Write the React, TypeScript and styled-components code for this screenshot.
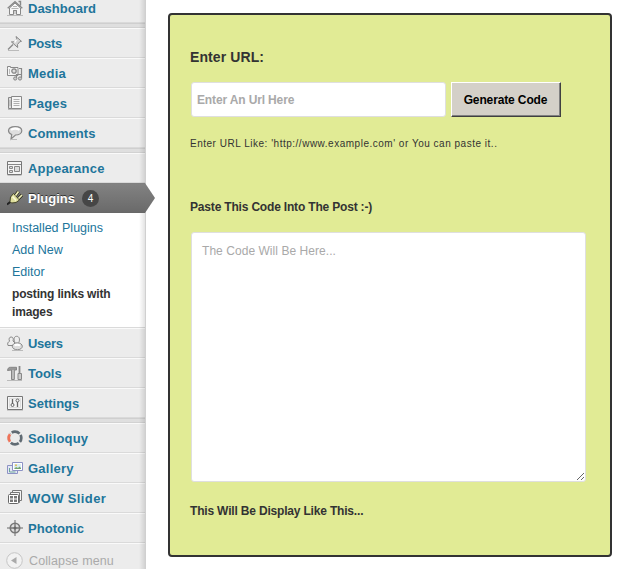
import React from "react";
import styled, { createGlobalStyle, css } from "styled-components";

const GlobalStyle = createGlobalStyle`
  html, body { margin: 0; height: 569px; overflow: hidden; background: #fff; }
  body { font-family: "Liberation Sans", Arial, sans-serif; font-size: 12px; color: #333; }
  * { box-sizing: border-box; }
`;

const Page = styled.div`
  display: flex;
  width: 631px;
  height: 569px;
  overflow: hidden;
`;

const Sidebar = styled.nav`
  position: relative;
  flex: none;
  width: 146px;
  height: 569px;
  background: #ececec;
  border-right: 1px solid #d0d0d0;
  &::after {
    content: "";
    position: absolute;
    inset: 0 0 0 auto;
    width: 6px;
    background: linear-gradient(to right, rgba(0, 0, 0, 0), rgba(0, 0, 0, 0.11));
    pointer-events: none;
  }
`;

const Group = styled.div<{ $clipped?: boolean }>`
  margin-top: ${(p) => (p.$clipped ? "-7px" : "0")};
`;

const Separator = styled.div`
  height: 5px;
  background: #dfdfdf;
  border-top: 1px solid #cfcfcf;
  border-bottom: 1px solid #d2d2d2;
`;

const Row = styled.a<{ $active?: boolean }>`
  display: flex;
  align-items: center;
  height: 30px;
  padding: 0 0 0 7px;
  gap: 5px;
  font-weight: bold;
  font-size: 13px;
  color: #21759b;
  border-top: 1px solid #fafafa;
  border-bottom: 1px solid #dadada;
  svg { flex: none; }
  ${(p) =>
    p.$active &&
    css`
      position: relative;
      z-index: 1;
      color: #fff;
      text-shadow: 0 -1px 0 #333;
      background: linear-gradient(#828282, #6a6a6a);
      border-top-color: #808080;
      border-bottom-color: #686868;
      &::after {
        content: "";
        position: absolute;
        left: 145px;
        top: -1px;
        width: 10px;
        height: 30px;
        background: linear-gradient(#828282, #6a6a6a);
        clip-path: polygon(0 0, 100% 50%, 0 100%);
      }
    `}
`;

const Label = styled.span<{ $track: number }>`
  letter-spacing: ${(p) => p.$track}px;
  line-height: 18px;
  white-space: nowrap;
`;

const MenuLabel = styled(Label)`
  padding-top: 2px;
`;

const Count = styled.span`
  width: 17px;
  height: 17px;
  margin: 1px 0 0 2px;
  border-radius: 50%;
  background: #464646;
  color: #fff;
  font-size: 10px;
  font-weight: normal;
  line-height: 17px;
  text-align: center;
  text-shadow: none;
`;

const Submenu = styled.div`
  height: 115px;
  padding: 4px 0 0 12px;
  background: #fff;
  border-bottom: 1px solid #dadada;
  display: flex;
  flex-direction: column;
`;

const SubLink = styled.a<{ $current?: boolean }>`
  font-size: ${(p) => (p.$current ? "12px" : "12.5px")};
  font-weight: ${(p) => (p.$current ? "bold" : "normal")};
  letter-spacing: ${(p) => (p.$current ? "-0.16px" : "0")};
  color: ${(p) => (p.$current ? "#333" : "#21759b")};
  line-height: 18px;
  padding: 2px 0;
`;

const Collapse = styled.div`
  display: flex;
  align-items: center;
  gap: 6px;
  height: 36px;
  padding: 0 0 2px 6px;
  border-top: 1px solid #fafafa;
  font-size: 12.5px;
  color: #aaa;
`;

const Panel = styled.main`
  display: flex;
  flex-direction: column;
  width: 444px;
  height: 544px;
  margin: 13px 0 0 22px;
  padding: 0 0 0 20px;
  border: 2px solid #333;
  border-radius: 4px;
  background: #e1eb95;
`;

const Title = styled.h3`
  margin: 33px 0 15px;
  font-size: 14px;
  line-height: 19px;
  letter-spacing: 0.1px;
`;

const Form = styled.div`
  display: flex;
  gap: 5px;
  padding-left: 1px;
`;

const UrlInput = styled.input`
  width: 255px;
  height: 35px;
  padding: 0 5px;
  border: 1px solid #dfdfdf;
  border-radius: 3px;
  background: #fff;
  outline: none;
  font: bold 12px "Liberation Sans", Arial, sans-serif;
  letter-spacing: -0.14px;
  &::placeholder { color: #a9a9a9; opacity: 1; }
`;

const Generate = styled.button`
  width: 110px;
  height: 35px;
  padding: 0 1px 0 0;
  border: 1px solid;
  border-color: #fff #404040 #404040 #fff;
  box-shadow: inset -1px -1px 0 #808080;
  background: #d4d0c8;
  color: #000;
  font: bold 12px "Liberation Sans", Arial, sans-serif;
  letter-spacing: -0.13px;
`;

const Hint = styled.p`
  margin: 19px 0 47px;
  font-size: 10px;
  line-height: 15px;
  letter-spacing: 0.51px;
  white-space: nowrap;
`;

const Caption = styled.h4`
  margin: 0;
  font-size: 12px;
  line-height: 18px;
  letter-spacing: -0.18px;
`;

const Code = styled.textarea`
  width: 395px;
  height: 250px;
  margin: 16px 0 20px 1px;
  padding: 10px;
  border: 1px solid #dfdfdf;
  border-radius: 3px;
  background: #fff;
  outline: none;
  resize: both;
  font: 12px/17px "Liberation Sans", Arial, sans-serif;
  letter-spacing: 0.05px;
  &::placeholder { color: #a9a9a9; opacity: 1; }
`;

const Glyph = ({ children }: { children: React.ReactNode }) => (
  <svg width="16" height="16" viewBox="0 0 16 16" fill="none" stroke="#888" strokeWidth="1">
    {children}
  </svg>
);

const icons = {
  home: (
    <Glyph>
      <path d="M2.5 8v6.5h4v-4h3v4h4V8L8 3z" fill="#f7f7f7" />
      <path d="M.7 8.300 8 1.700l7.300 6.600M11.500 1.500h2v4" strokeWidth="1.400" />
      <path d="M4.500 8.500h7M6 6.500h4" stroke="#b5b5b5" />
      <path d="M6.500 14v-3.500h3V14" fill="#ccc" />
      <path d="M0 15.500h16" stroke="#bbb" />
    </Glyph>
  ),
  pin: (
    <Glyph>
      <path d="m1 14.500 5-5" strokeWidth="1.300" />
      <path d="m9 1.500 5.500 4.800-1.800.5-2.200 2.700.2 3-6.300-5.600 3-.1 2.300-3z" fill="#d5d5d5" />
      <path d="m9.500 4.500-2 3" stroke="#fff" strokeWidth="1.500" />
      <path d="M1 15.500h11" stroke="#bbb" />
    </Glyph>
  ),
  media: (
    <Glyph>
      <path d="M.5 3.500V1.500h3v1h7.500v8H.5z" fill="#f5f5f5" />
      <circle cx="7" cy="6" r="2.200" fill="#ddd" strokeWidth="1.300" />
      <path d="M2.500 4v5" stroke="#bbb" />
      <path d="M12 3.500h2.500v9.500M9.500 13V9.500h5" strokeWidth="1.200" />
      <circle cx="8.200" cy="13.500" r="1.600" fill="#ccc" />
      <circle cx="13" cy="13.500" r="1.600" fill="#ccc" />
    </Glyph>
  ),
  pages: (
    <Glyph>
      <path d="M1.500 2.500h7v11h-7z" fill="#ddd" />
      <path d="M4.500 1.500h10v12h-10z" fill="#f7f7f7" />
      <path d="M6.500 4.500h6M6.500 6.500h6M6.500 8.500h6M6.500 10.500h6" stroke="#b0b0b0" />
      <path d="M3 5v6" stroke="#aaa" />
      <path d="M1 14.500h14" stroke="#bbb" />
    </Glyph>
  ),
  comment: (
    <Glyph>
      <path d="M8.200 1.600c4 0 6.600 1.700 6.600 4.200S12 10 8.500 10L4 14l.7-4.500C2.700 8.700 1.500 7.500 1.500 5.800c0-2.500 2.700-4.200 6.700-4.200z" fill="#dedede" strokeWidth="1.200" />
      <path d="M4 4.800c2-1.700 6-1.700 8.500 0" stroke="#fff" strokeWidth="2.200" />
      <path d="M3 14.500h7" stroke="#bbb" />
    </Glyph>
  ),
  layout: (
    <Glyph>
      <path d="M.5 1.500h14v13H.5z" fill="#f5f5f5" stroke="#777" />
      <path d="M1 4.500h13" />
      <path d="M2.500 6.500h3v2h-3zM2.500 10.500h3v2h-3zM7.500 6.500h5v5h-5z" fill="#ddd" />
      <path d="M.5 15.500h14" stroke="#c5c5c5" />
    </Glyph>
  ),
  plug: (
    <Glyph>
      <path d="M0 14.500 4.500 11" stroke="#222" strokeWidth="2" />
      <path d="m6.500 3.500 6 6.500-3.500 2.500-4.500.5-1.500-1.500.5-4.500z" fill="#dede9c" stroke="#45452c" />
      <path d="m8.500 5.500 3-4M11.500 8.500l3.500-3.500" stroke="#30301f" strokeWidth="3.200" />
      <path d="m8.500 5.500 3-4M11.500 8.500l3.500-3.500" stroke="#f0efb9" strokeWidth="1.700" />
      <path d="m5.500 6.500 3.500 4" stroke="#fbfad9" strokeWidth="1.500" />
    </Glyph>
  ),
  users: (
    <Glyph>
      <path d="M1 10.500C.2 8.200 1 7 2.500 6.300 1.500 3.500 2.500 2 4.200 2s2.600 1.700 1.800 4L8 8v2.500z" fill="#eee" />
      <path d="M8 7.500C6.500 4.500 6.800 1.500 9.500 1.300s3.800 3 2.300 6.200" fill="#eee" />
      <ellipse cx="10.300" cy="11.300" rx="5" ry="3.500" fill="#ddd" />
      <path d="M7.500 10.500c1-1 4-1 5.500 0" stroke="#fff" strokeWidth="1.800" />
      <path d="M5 15.500h11" stroke="#bbb" />
    </Glyph>
  ),
  tools: (
    <Glyph>
      <path d="M.5 5.500C1 2.800 2 2.300 3.500 2.300h6V5H7.300v9.500H4.500V5z" fill="#999" stroke="#858585" />
      <path d="M6 5v9" stroke="#ddd" />
      <path d="M12.500 1v7" strokeWidth="1.800" />
      <path d="M11 8.500h3.500v6H11z" fill="#ccc" />
      <path d="M0 15.500h15" stroke="#bbb" />
    </Glyph>
  ),
  settings: (
    <Glyph>
      <path d="M.5 1.500h15v13H.5z" fill="#f5f5f5" stroke="#777" />
      <path d="M2.500 3.500h11v9h-11z" stroke="#ddd" />
      <path d="M5.500 4v5M10.500 7v5" stroke="#666" strokeWidth="1.300" />
      <circle cx="5.500" cy="10" r="1.500" stroke="#666" />
      <circle cx="10.500" cy="5.500" r="1.500" stroke="#666" />
      <path d="M0 15.500h16" stroke="#ccc" />
    </Glyph>
  ),
  ring: (
    <Glyph>
      <circle cx="8" cy="8" r="6.300" stroke="#606b73" strokeWidth="2.700" strokeDasharray="8.400 1.500" strokeDashoffset="4.200" />
      <path d="M3.300 12.200A6.300 6.300 0 0 1 3.300 3.800" stroke="#ececec" strokeWidth="3.200" />
      <path d="M3 11.700A6.300 6.300 0 0 1 3 4.300" stroke="#f07358" strokeWidth="2.700" />
    </Glyph>
  ),
  gallery: (
    <Glyph>
      <path d="M.5 5.500h10v8H.5z" fill="#e5e8f5" stroke="#8c92c5" />
      <path d="M2.500 8v4h6" stroke="#6ca59b" />
      <path d="M5.500 2.500h10v8h-10z" fill="#fff" stroke="#8c92c5" />
      <path d="M7 4h7v5H7z" fill="#d9edf5" stroke="none" />
      <path d="m7 9 2-2 2 1 1.500-1.500L14 8v1z" fill="#76a46d" stroke="none" />
      <circle cx="9" cy="5.200" r="1" fill="#e4bd4c" stroke="none" />
    </Glyph>
  ),
  slider: (
    <Glyph>
      <path d="M5.500 3V.5h9v10H12M3.500 4V2.500h9v10H11" fill="#f5f5f5" stroke="#777" />
      <rect x="1.500" y="4.500" width="10" height="9" rx="1" fill="#fff" stroke="#666" />
      <path d="M3 6h3v2.500H3zM7 6h3v2.500H7zM3 9.500h3V12H3zM7 9.500h3V12H7z" fill="#777" stroke="none" />
    </Glyph>
  ),
  target: (
    <Glyph>
      <path d="M8 0v16M0 8h16" stroke="#aaa" strokeWidth="2" />
      <circle cx="8" cy="8" r="4.700" fill="#ddd" stroke="#777" strokeWidth="1.600" />
      <path d="M8 3v10M3 8h10" stroke="#777" strokeWidth="1.400" />
      <circle cx="8" cy="8" r="1.500" fill="#666" stroke="none" />
    </Glyph>
  ),
};

type Item = { text: string; icon: keyof typeof icons; track: number };

const top: Item[] = [{ text: "Dashboard", icon: "home", track: 0 }];
const content: Item[] = [
  { text: "Posts", icon: "pin", track: -0.3 },
  { text: "Media", icon: "media", track: 0.25 },
  { text: "Pages", icon: "pages", track: 0.15 },
  { text: "Comments", icon: "comment", track: 0.03 },
];
const people: Item[] = [
  { text: "Users", icon: "users", track: -0.3 },
  { text: "Tools", icon: "tools", track: 0 },
  { text: "Settings", icon: "settings", track: 0 },
];
const extras: Item[] = [
  { text: "Soliloquy", icon: "ring", track: 0.2 },
  { text: "Gallery", icon: "gallery", track: 0.25 },
  { text: "WOW Slider", icon: "slider", track: 0.38 },
  { text: "Photonic", icon: "target", track: 0.06 },
];

const MenuItem = ({ item, count }: { item: Item; count?: number }) => (
  <Row $active={count !== undefined}>
    {icons[item.icon]}
    <MenuLabel $track={item.track}>{item.text}</MenuLabel>
    {count !== undefined && <Count>{count}</Count>}
  </Row>
);

const MenuItems = ({ items }: { items: Item[] }) => (
  <>
    {items.map((item) => (
      <MenuItem key={item.text} item={item} />
    ))}
  </>
);

export default function App() {
  return (
    <Page>
      <GlobalStyle />
      <Sidebar>
        <Group $clipped>
          <MenuItems items={top} />
        </Group>
        <Separator />
        <Group>
          <MenuItems items={content} />
        </Group>
        <Separator />
        <Group>
          <MenuItem item={{ text: "Appearance", icon: "layout", track: 0.22 }} />
          <MenuItem item={{ text: "Plugins", icon: "plug", track: 0 }} count={4} />
          <Submenu>
            <SubLink>Installed Plugins</SubLink>
            <SubLink>Add New</SubLink>
            <SubLink>Editor</SubLink>
            <SubLink $current>
              posting links with
              <br />
              images
            </SubLink>
          </Submenu>
          <MenuItems items={people} />
        </Group>
        <Separator />
        <Group>
          <MenuItems items={extras} />
        </Group>
        <Collapse>
          <svg width="17" height="17" viewBox="0 0 17 17">
            <circle cx="8.500" cy="8.500" r="7.800" fill="#f2f2f2" stroke="#c5c5c5" />
            <path d="M5 8.500 10.500 5v7z" fill="#aaa" />
          </svg>
          <Label $track={0.12}>Collapse menu</Label>
        </Collapse>
      </Sidebar>
      <Panel>
        <Title>Enter URL:</Title>
        <Form>
          <UrlInput placeholder="Enter An Url Here" />
          <Generate>Generate Code</Generate>
        </Form>
        <Hint>Enter URL Like: 'http://www.example.com' or You can paste it..</Hint>
        <Caption>Paste This Code Into The Post :-)</Caption>
        <Code placeholder="The Code Will Be Here..." />
        <Caption>This Will Be Display Like This...</Caption>
      </Panel>
    </Page>
  );
}
